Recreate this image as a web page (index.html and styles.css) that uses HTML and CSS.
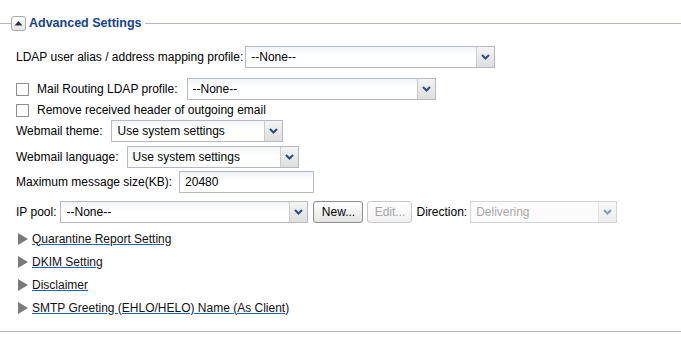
FILE: index.html
```html
<!DOCTYPE html>
<html>
<head>
    <title>Advanced Settings</title>
    <link rel="stylesheet" href="styles.css">
</head>
<body>
    <div class="panel">
        <div class="legend">
            <span class="rule rule-short"></span>
            <span class="toggle">
                <svg width="9" height="6" viewBox="0 0 9 6"><polygon points="0.5,5.5 4.5,1 8.5,5.5" fill="#333"/></svg>
            </span>
            <span class="legend-title">Advanced Settings</span>
            <span class="rule rule-long"></span>
        </div>

        <div class="row row-first">
            <label class="lbl gap-2">LDAP user alias / address mapping profile:</label>
            <div class="select w-250">
                <span class="value">--None--</span>
                <span class="arrow"><svg width="9" height="6" viewBox="0 0 9 6"><polyline points="1,1 4.5,4.5 8,1" fill="none" stroke="#2a4a8c" stroke-width="2"/></svg></span>
            </div>
        </div>

        <div class="row row-check">
            <span class="checkbox"></span>
            <label class="lbl gap-9">Mail Routing LDAP profile:</label>
            <div class="select w-249">
                <span class="value">--None--</span>
                <span class="arrow"><svg width="9" height="6" viewBox="0 0 9 6"><polyline points="1,1 4.5,4.5 8,1" fill="none" stroke="#2a4a8c" stroke-width="2"/></svg></span>
            </div>
        </div>

        <div class="row row-plain">
            <span class="checkbox"></span>
            <label class="lbl">Remove received header of outgoing email</label>
        </div>

        <div class="row row-theme">
            <label class="lbl gap-9">Webmail theme:</label>
            <div class="select w-172">
                <span class="value">Use system settings</span>
                <span class="arrow"><svg width="9" height="6" viewBox="0 0 9 6"><polyline points="1,1 4.5,4.5 8,1" fill="none" stroke="#2a4a8c" stroke-width="2"/></svg></span>
            </div>
        </div>

        <div class="row row-lang">
            <label class="lbl gap-8">Webmail language:</label>
            <div class="select w-172">
                <span class="value">Use system settings</span>
                <span class="arrow"><svg width="9" height="6" viewBox="0 0 9 6"><polyline points="1,1 4.5,4.5 8,1" fill="none" stroke="#2a4a8c" stroke-width="2"/></svg></span>
            </div>
        </div>

        <div class="row row-size">
            <label class="lbl gap-7">Maximum message size(KB):</label>
            <div class="textbox">20480</div>
        </div>

        <div class="row row-ip">
            <label class="lbl gap-4">IP pool:</label>
            <div class="select w-248">
                <span class="value">--None--</span>
                <span class="arrow"><svg width="9" height="6" viewBox="0 0 9 6"><polyline points="1,1 4.5,4.5 8,1" fill="none" stroke="#2a4a8c" stroke-width="2"/></svg></span>
            </div>
            <button class="btn">New...</button>
            <button class="btn btn-disabled">Edit...</button>
            <label class="lbl gap-3">Direction:</label>
            <div class="select w-147 select-disabled">
                <span class="value">Delivering</span>
                <span class="arrow"><svg width="9" height="6" viewBox="0 0 9 6"><polyline points="1,1 4.5,4.5 8,1" fill="none" stroke="#8797b8" stroke-width="2"/></svg></span>
            </div>
        </div>

        <ul class="links">
            <li><span class="tri"></span><a href="#">Quarantine Report Setting</a></li>
            <li><span class="tri"></span><a href="#">DKIM Setting</a></li>
            <li><span class="tri"></span><a href="#">Disclaimer</a></li>
            <li><span class="tri"></span><a href="#">SMTP Greeting (EHLO/HELO) Name (As Client)</a></li>
        </ul>

        <div class="bottom-rule"></div>
    </div>
</body>
</html>
```

FILE: styles.css
```css
body {
    margin: 0;
    background-color: #ffffff;
    font-family: 'Liberation Sans', Arial, sans-serif;
    font-size: 12px;
    color: #000000;
}

.panel {
    width: 681px;
}

.legend {
    display: flex;
    align-items: center;
    height: 22px;
    margin-top: 12px;
}

.rule {
    border-top: 1px solid #b9b7c6;
    height: 0;
}

.rule-short {
    width: 11px;
}

.rule-long {
    flex: 1;
    margin-left: 3px;
}

.toggle {
    width: 13px;
    height: 13px;
    border: 1px solid #a9a9a9;
    border-radius: 3px;
    background: linear-gradient(#ffffff, #e6e6e6);
    display: flex;
    align-items: center;
    justify-content: center;
}

.legend-title {
    margin-left: 3px;
    font-weight: bold;
    font-size: 12.5px;
    color: #15428b;
}

.row {
    display: flex;
    align-items: center;
    padding-left: 16px;
    height: 22px;
}

.row-first { margin-top: 12px; }
.row-check { margin-top: 10px; }
.row-plain { height: 20px; }
.row-theme { margin-top: 0; }
.row-lang { margin-top: 4px; }
.row-size { margin-top: 3px; }
.row-ip { margin-top: 8px; }

.lbl {
    white-space: nowrap;
}

.gap-2 { margin-right: 2px; }
.gap-3 { margin-right: 3px; }
.gap-4 { margin-right: 4px; }
.gap-7 { margin-right: 7px; }
.gap-8 { margin-right: 8px; }
.gap-9 { margin-right: 9px; }

.checkbox {
    width: 11px;
    height: 11px;
    border: 1px solid #8f8f8f;
    background: #ffffff;
    margin-right: 8px;
    flex: none;
}

.select {
    display: flex;
    height: 20px;
    border: 1px solid #b5b8c8;
    background: linear-gradient(#f2f4f7, #ffffff 45%);
    box-sizing: content-box;
}

.select .value {
    flex: 1;
    padding-left: 5px;
    line-height: 21px;
    white-space: nowrap;
    overflow: hidden;
}

.select .arrow {
    width: 17px;
    border-left: 1px solid #c9ccd6;
    background: linear-gradient(#f4f4f4, #dedede);
    display: flex;
    align-items: center;
    justify-content: center;
}

.w-250 { width: 248px; }
.w-249 { width: 247px; }
.w-248 { width: 246px; }
.w-172 { width: 170px; }
.w-147 { width: 145px; }

.select-disabled {
    border-color: #d3d5dd;
    background: #fbfbfb;
    color: #a8a8a8;
}

.select-disabled .arrow {
    border-left-color: #e0e1e6;
    background: linear-gradient(#f8f8f8, #ececec);
}

.textbox {
    width: 128px;
    height: 20px;
    line-height: 21px;
    padding-left: 5px;
    border: 1px solid #b5b8c8;
    background: linear-gradient(#f2f4f7, #ffffff 45%);
}

.btn {
    font-family: 'Liberation Sans', Arial, sans-serif;
    font-size: 12px;
    height: 22px;
    width: 50px;
    padding: 0;
    margin-left: 5px;
    border: 1px solid #8c8c8c;
    border-radius: 3px;
    background: linear-gradient(#ffffff, #e4e4e4);
    color: #000000;
}

.btn + .btn {
    width: 45px;
    margin-left: 4px;
    margin-right: 4px;
}

.btn-disabled {
    color: #a6a6a6;
    border-color: #c8c8c8;
    background: linear-gradient(#ffffff, #f0f0f0);
}

.links {
    list-style: none;
    margin: 4px 0 0 0;
    padding: 0 0 0 18px;
}

.links li {
    height: 23px;
    display: flex;
    align-items: center;
}

.tri {
    width: 0;
    height: 0;
    border-top: 6px solid transparent;
    border-bottom: 6px solid transparent;
    border-left: 10px solid #7a7a7a;
    margin-right: 4px;
}

.links a {
    color: #111111;
    text-decoration: underline;
    text-decoration-color: #1f5fc8;
}

.bottom-rule {
    margin-top: 12px;
    border-top: 1px solid #b9b7c6;
}
```
